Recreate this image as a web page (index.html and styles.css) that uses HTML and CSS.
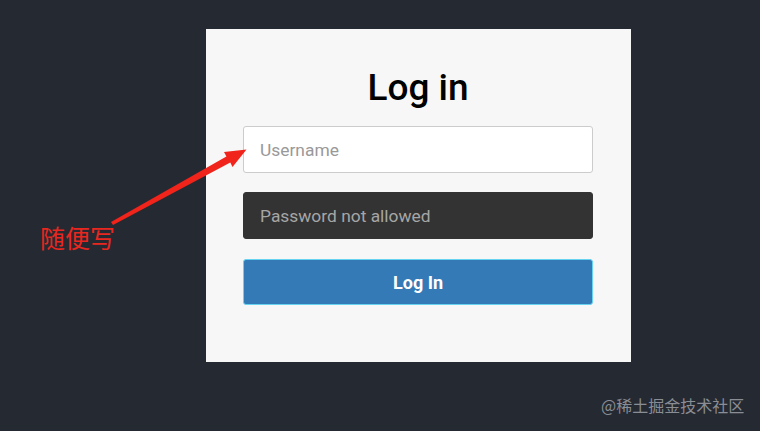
FILE: index.html
```html
<!DOCTYPE html>
<html lang="zh">
<head>
<meta charset="utf-8">
<link rel="stylesheet" href="styles.css">
</head>
<body>
<div class="card">
  <h1 class="title">Log in</h1>
  <form class="form">
    <input class="field field-user" type="text" placeholder="Username">
    <input class="field field-pass" type="text" placeholder="Password not allowed">
    <button class="btn" type="button">Log In</button>
  </form>
</div>
<div class="note">随便写</div>
<svg class="arrow" width="260" height="260" viewBox="0 0 260 260">
  <polygon points="111,222 226.4,156.5 224,152 246.5,149.5 232.5,167 230.3,162.6 113,225" fill="#f0241b"/>
</svg>
<div class="mark">@稀土掘金技术社区</div>
</body>
</html>
```
FILE: styles.css
```css
html, body {
  margin: 0;
  padding: 0;
}
body {
  width: 760px;
  height: 431px;
  overflow: hidden;
  background: #252932;
  font-family: Roboto, "Noto Sans", sans-serif;
  position: relative;
}
.card {
  margin: 29px 0 0 206px;
  width: 425px;
  height: 333px;
  box-sizing: border-box;
  padding: 37px 0 0 37px;
  background: #f7f7f7;
  display: flex;
  flex-direction: column;
}
.title {
  margin: 0;
  width: 350px;
  text-align: center;
  font-size: 37px;
  line-height: 44px;
  font-weight: 500;
  color: #000;
}
.form {
  margin-top: 16px;
  display: flex;
  flex-direction: column;
  gap: 19px;
  width: 350px;
}
.field {
  box-sizing: border-box;
  width: 350px;
  height: 47px;
  margin: 0;
  padding: 0 16px;
  font-family: Roboto, sans-serif;
  font-size: 17.4px;
  border-radius: 3px;
  outline: none;
}
.field-user {
  background: #fff;
  border: 1px solid #cccccc;
}
.field-user::placeholder {
  color: #999;
}
.field-pass {
  background: #333333;
  border: 1px solid #333333;
}
.field-pass::placeholder {
  color: #a6a6a6;
}
.btn {
  margin-top: 1px;
  box-sizing: border-box;
  width: 350px;
  height: 46px;
  background: #337ab7;
  border: 1px solid #66d4f0;
  border-radius: 3px;
  color: #fff;
  font-family: Roboto, sans-serif;
  font-size: 18px;
  font-weight: 700;
}
.note {
  position: absolute;
  left: 40px;
  top: 222px;
  font-family: "Noto Sans CJK SC", sans-serif;
  font-size: 25px;
  line-height: 30px;
  color: #e8271f;
}
.arrow {
  position: absolute;
  left: 0;
  top: 0;
}
.mark {
  position: absolute;
  left: 601px;
  top: 394px;
  font-family: "Noto Sans CJK SC", sans-serif;
  font-size: 16px;
  line-height: 22px;
  color: #8a8d93;
}
```
